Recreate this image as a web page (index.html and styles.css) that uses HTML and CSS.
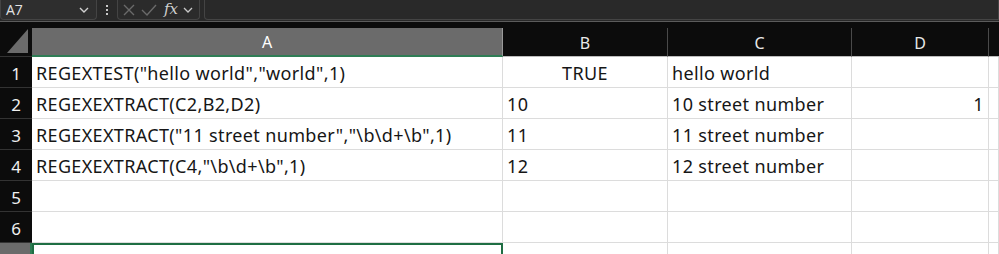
FILE: index.html
```html
<!DOCTYPE html>
<html>
<head>
<meta charset="utf-8">
<link rel="stylesheet" href="styles.css">
</head>
<body>
<div class="app">
  <div class="bar">
    <div class="namebox"><span class="ref">A7</span>
      <svg class="chev" width="10" height="6" viewBox="0 0 10 6"><path d="M1 1 L5 5 L9 1" fill="none" stroke="#d0d0d0" stroke-width="1.4"/></svg>
    </div>
    <div class="dots"><span></span><span></span><span></span></div>
    <div class="fbox">
      <svg width="14" height="12" viewBox="0 0 14 12"><path d="M2 1 L12 11 M12 1 L2 11" stroke="#6a6a6a" stroke-width="1.4"/></svg>
      <svg width="16" height="12" viewBox="0 0 16 12"><path d="M1 6 L6 11 L15 1" fill="none" stroke="#6a6a6a" stroke-width="1.4"/></svg>
      <span class="fx">fx</span>
      <svg width="10" height="6" viewBox="0 0 10 6"><path d="M1 1 L5 5 L9 1" fill="none" stroke="#c8c8c8" stroke-width="1.3"/></svg>
    </div>
    <div class="finput"></div>
  </div>
  <div class="gap"></div>
  <div class="sheet">
    <div class="corner"><svg width="22" height="24" viewBox="0 0 22 24"><path d="M21 0 L21 24 L0 24 Z" fill="#6b6b6b"/></svg></div>
    <div class="ch sel">A</div>
    <div class="ch">B</div>
    <div class="ch">C</div>
    <div class="ch">D</div>
    <div class="ch last"></div>

    <div class="rh">1</div>
    <div class="c">REGEXTEST("hello world","world",1)</div>
    <div class="c center">TRUE</div>
    <div class="c">hello world</div>
    <div class="c"></div>
    <div class="c"></div>

    <div class="rh">2</div>
    <div class="c">REGEXEXTRACT(C2,B2,D2)</div>
    <div class="c">10</div>
    <div class="c">10 street number</div>
    <div class="c right">1</div>
    <div class="c"></div>

    <div class="rh">3</div>
    <div class="c">REGEXEXTRACT("11 street number","\b\d+\b",1)</div>
    <div class="c">11</div>
    <div class="c">11 street number</div>
    <div class="c"></div>
    <div class="c"></div>

    <div class="rh">4</div>
    <div class="c">REGEXEXTRACT(C4,"\b\d+\b",1)</div>
    <div class="c">12</div>
    <div class="c">12 street number</div>
    <div class="c"></div>
    <div class="c"></div>

    <div class="rh">5</div>
    <div class="c"></div><div class="c"></div><div class="c"></div><div class="c"></div><div class="c"></div>

    <div class="rh">6</div>
    <div class="c"></div><div class="c"></div><div class="c"></div><div class="c"></div><div class="c"></div>

    <div class="rh selrow">7</div>
    <div class="c active"></div><div class="c"></div><div class="c"></div><div class="c"></div><div class="c"></div>
  </div>
</div>
</body>
</html>
```
FILE: styles.css
```css
* { box-sizing: border-box; }
html, body { margin: 0; padding: 0; }
body { width: 999px; height: 254px; overflow: hidden; background: #0c0c0c; font-family: "Noto Sans", "Liberation Sans", sans-serif; }
.app { width: 999px; }
.bar { height: 22px; background: #292929; border-bottom: 1px solid #5c5c5c; display: flex; align-items: flex-start; }
.namebox { width: 97px; height: 20px; background: #2e2e2e; border: 1px solid #444; border-top: none; border-radius: 0 0 4px 4px; display: flex; align-items: center; justify-content: space-between; padding: 0 7px 0 5px; }
.ref { color: #e2e2e2; font-size: 14px; font-family: "Open Sans", sans-serif; }
.dots { width: 20px; height: 20px; display: flex; flex-direction: column; align-items: center; justify-content: center; gap: 2px; }
.dots span { width: 2px; height: 2px; background: #c8c8c8; display: block; }
.fbox { width: 83px; height: 20px; border: 1px solid #444; border-top: none; border-radius: 0 0 4px 4px; background: #2b2b2b; display: flex; align-items: center; gap: 5px; padding-left: 4px; }
.fx { color: #d0d0d0; font-family: "DejaVu Serif", serif; font-style: italic; font-size: 15px; line-height: 1; margin-left: 2px; }
.finput { flex: 1; height: 20px; margin-left: 4px; border: 1px solid #444; border-top: none; border-radius: 0 0 0 4px; background: #292929; }
.gap { height: 6px; background: #0c0c0c; }
.sheet { display: grid; grid-template-columns: 32px 471px 165px 184px 137px 1fr; grid-template-rows: 29px repeat(6, 31px) 31px; background: #fff; }
.corner { background: #0c0c0c; display: flex; align-items: flex-end; justify-content: flex-end; padding: 0 3px 3px 0; border-bottom: 1px solid #333; }
.ch { background: #0c0c0c; color: #e8e8e8; font-size: 16px; display: flex; align-items: center; justify-content: center; border-right: 1px solid #4a4a4a; border-bottom: 1px solid #bdbdbd; padding-top: 1px; }
.ch.sel { background: #6b6b6b; border-bottom: 2px solid #2f7d55; border-right: 1px solid #9a9a9a; color: #fff; }
.ch.last { border-right: none; }
.rh { background: #0c0c0c; color: #f0f0f0; font-size: 17px; display: flex; align-items: flex-end; justify-content: center; padding-bottom: 2px; border-bottom: 1px solid #333; }
.rh.selrow { background: #6b6b6b; border-right: 2px solid #2f7d55; }
.c { background: #fff; color: #161616; font-size: 18px; letter-spacing: 0.35px; border-right: 1px solid #dcdcdc; border-bottom: 1px solid #dcdcdc; display: flex; align-items: flex-end; padding: 0 4px 2px 4px; white-space: nowrap; overflow: hidden; line-height: 1.2; }
.c.center { justify-content: center; }
.c.right { justify-content: flex-end; }
.c.active { border: 2px solid #1f6e43; }
```
